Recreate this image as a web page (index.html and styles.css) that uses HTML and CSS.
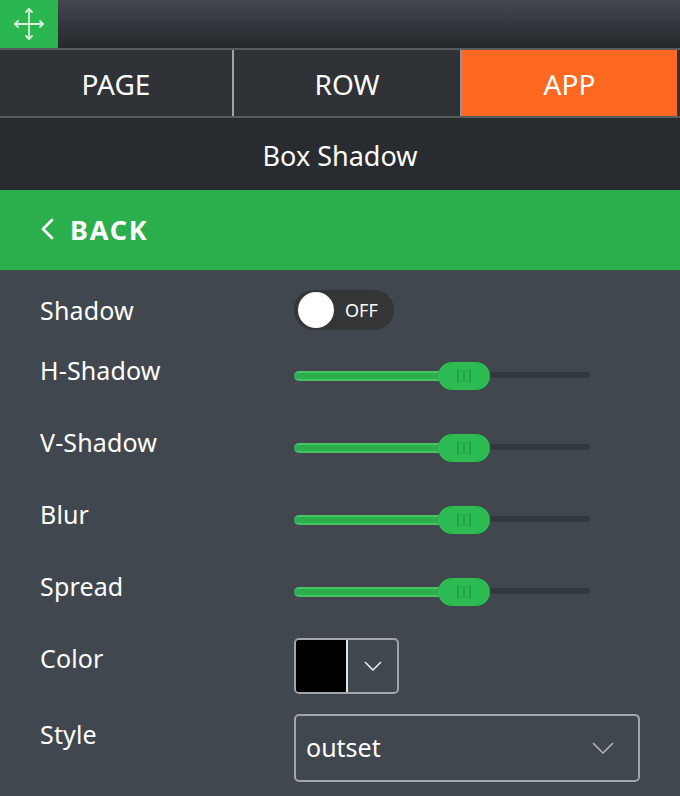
FILE: index.html
```html
<!DOCTYPE html>
<html lang="en">
<head>
  <meta charset="UTF-8">
  <meta name="viewport" content="width=device-width, initial-scale=1.0">
  <title>Box Shadow</title>
  <link rel="stylesheet" href="styles.css">
</head>
<body>
  <div class="topbar">
    <div class="move-btn">
      <svg width="32" height="34" viewBox="0 0 32 34" fill="none" stroke="#d5f0db" stroke-width="1.8" stroke-linecap="round" stroke-linejoin="round">
        <path d="M16 2v30M2 17h28"/>
        <path d="M13 5l3-3 3 3M13 29l3 3 3-3M5 14l-3 3 3 3M27 14l3 3-3 3"/>
      </svg>
    </div>
  </div>
  <div class="tabs">
    <div class="tab tab-page">PAGE</div>
    <div class="tab tab-row">ROW</div>
    <div class="tab tab-app">APP</div>
  </div>
  <div class="title">Box Shadow</div>
  <div class="back">
    <svg width="14" height="22" viewBox="0 0 14 22" fill="none" stroke="#fff" stroke-width="2.8" stroke-linecap="round" stroke-linejoin="round">
      <path d="M12 2L3 11l9 9"/>
    </svg>
    <span>BACK</span>
  </div>
  <div class="options">
    <div class="row row-toggle">
      <label>Shadow</label>
      <div class="toggle"><span class="toggle-dot"></span><span class="toggle-text">OFF</span></div>
    </div>
    <div class="row row-slider">
      <label>H-Shadow</label>
      <div class="slider"><span class="fill"></span><span class="knob"><i></i><i></i><i></i></span><span class="rest"></span></div>
    </div>
    <div class="row row-slider">
      <label>V-Shadow</label>
      <div class="slider"><span class="fill"></span><span class="knob"><i></i><i></i><i></i></span><span class="rest"></span></div>
    </div>
    <div class="row row-slider">
      <label>Blur</label>
      <div class="slider"><span class="fill"></span><span class="knob"><i></i><i></i><i></i></span><span class="rest"></span></div>
    </div>
    <div class="row row-slider">
      <label>Spread</label>
      <div class="slider"><span class="fill"></span><span class="knob"><i></i><i></i><i></i></span><span class="rest"></span></div>
    </div>
    <div class="row row-color">
      <label>Color</label>
      <div class="color-picker">
        <span class="swatch"></span>
        <span class="color-arrow">
          <svg width="18" height="10" viewBox="0 0 18 10" fill="none" stroke="#fff" stroke-width="1.4"><path d="M1 1l8 8 8-8"/></svg>
        </span>
      </div>
    </div>
    <div class="row">
      <label>Style</label>
      <div class="select">
        <span class="select-text">outset</span>
        <svg width="22" height="12" viewBox="0 0 22 12" fill="none" stroke="#b5b8bb" stroke-width="1.5"><path d="M1 1l10 10L21 1"/></svg>
      </div>
    </div>
  </div>
</body>
</html>
```

FILE: styles.css
```css
body {
  font-family: "Noto Sans", "Open Sans", sans-serif;
  margin: 0;
  padding: 0;
  background: #41474e;
  color: #fff;
  height: 796px;
  overflow: hidden;
}
.topbar {
  height: 48px;
  background: linear-gradient(#434750, #25282b);
}
.move-btn {
  width: 58px;
  height: 48px;
  border-bottom: 2px solid #55c46f;
  background: #2bb650;
  display: flex;
  justify-content: center;
  align-items: center;
}
.tabs {
  display: flex;
  height: 66px;
  background: #2f3337;
  border-top: 2px solid #585c60;
  border-bottom: 2px solid #585c60;
  font-size: 28px;
}
.tab {
  display: flex;
  justify-content: center;
  align-items: center;
  padding-top: 2px;
  box-sizing: border-box;
}
.tab-page {
  width: 234px;
  border-right: 2px solid #a0a4a6;
}
.tab-row {
  width: 228px;
  border-right: 2px solid #8f9699;
}
.tab-app {
  width: 215px;
  background: #ff6820;
}
.title {
  height: 72px;
  background: #282b30;
  display: flex;
  justify-content: center;
  align-items: center;
  padding-top: 2px;
  box-sizing: border-box;
  font-size: 27px;
}
.back {
  height: 80px;
  background: #2bae4c;
  display: flex;
  align-items: center;
  padding: 0 0 2px 40px;
  box-sizing: border-box;
  gap: 16px;
  font-size: 27px;
  font-weight: 700;
  letter-spacing: 1.8px;
}
.options {
  padding: 20px 40px 0;
}
.row {
  display: flex;
  align-items: flex-start;
}
.row label {
  width: 254px;
  line-height: 40px;
  font-size: 25px;
  letter-spacing: 0.15px;
  flex-shrink: 0;
}
.row-toggle {
  height: 60px;
}
.row-slider {
  height: 72px;
}
.row-color {
  height: 76px;
}
.toggle {
  width: 100px;
  height: 40px;
  border-radius: 20px;
  background: #333537;
  display: flex;
  align-items: center;
  padding-left: 4px;
  box-sizing: border-box;
  gap: 11px;
}
.toggle-dot {
  width: 36px;
  height: 36px;
  border-radius: 50%;
  background: #fff;
}
.toggle-text {
  font-size: 18px;
}
.slider {
  width: 296px;
  height: 28px;
  margin-top: 12px;
  display: flex;
  align-items: center;
}
.fill {
  width: 150px;
  height: 10px;
  background: #2bae4c;
  border-top: 2px solid #45c264;
  border-bottom: 2px solid #45c264;
  border-radius: 5px 0 0 5px;
  box-sizing: border-box;
}
.knob {
  width: 52px;
  height: 28px;
  margin-left: -6px;
  border-radius: 14px;
  background: #2bbb52;
  display: flex;
  justify-content: center;
  align-items: center;
  gap: 4px;
  flex-shrink: 0;
  position: relative;
}
.knob i {
  width: 2px;
  height: 12px;
  background: #27a347;
}
.rest {
  flex: 1;
  height: 6px;
  margin-bottom: 2px;
  background: #33383c;
  border-radius: 0 3px 3px 0;
}
.color-picker {
  width: 105px;
  height: 56px;
  border: 2px solid #a3a6a9;
  border-radius: 5px;
  box-sizing: border-box;
  display: flex;
}
.swatch {
  width: 50px;
  background: #000;
  border-right: 2px solid #e4e5e6;
  border-radius: 3px 0 0 3px;
}
.color-arrow {
  flex: 1;
  display: flex;
  justify-content: center;
  align-items: center;
}
.select {
  width: 346px;
  height: 68px;
  border: 2px solid #a3a6a9;
  border-radius: 5px;
  box-sizing: border-box;
  display: flex;
  justify-content: space-between;
  align-items: center;
  padding: 0 24px 0 10px;
  font-size: 25px;
}
.select-text {
  padding-bottom: 2px;
}
```
